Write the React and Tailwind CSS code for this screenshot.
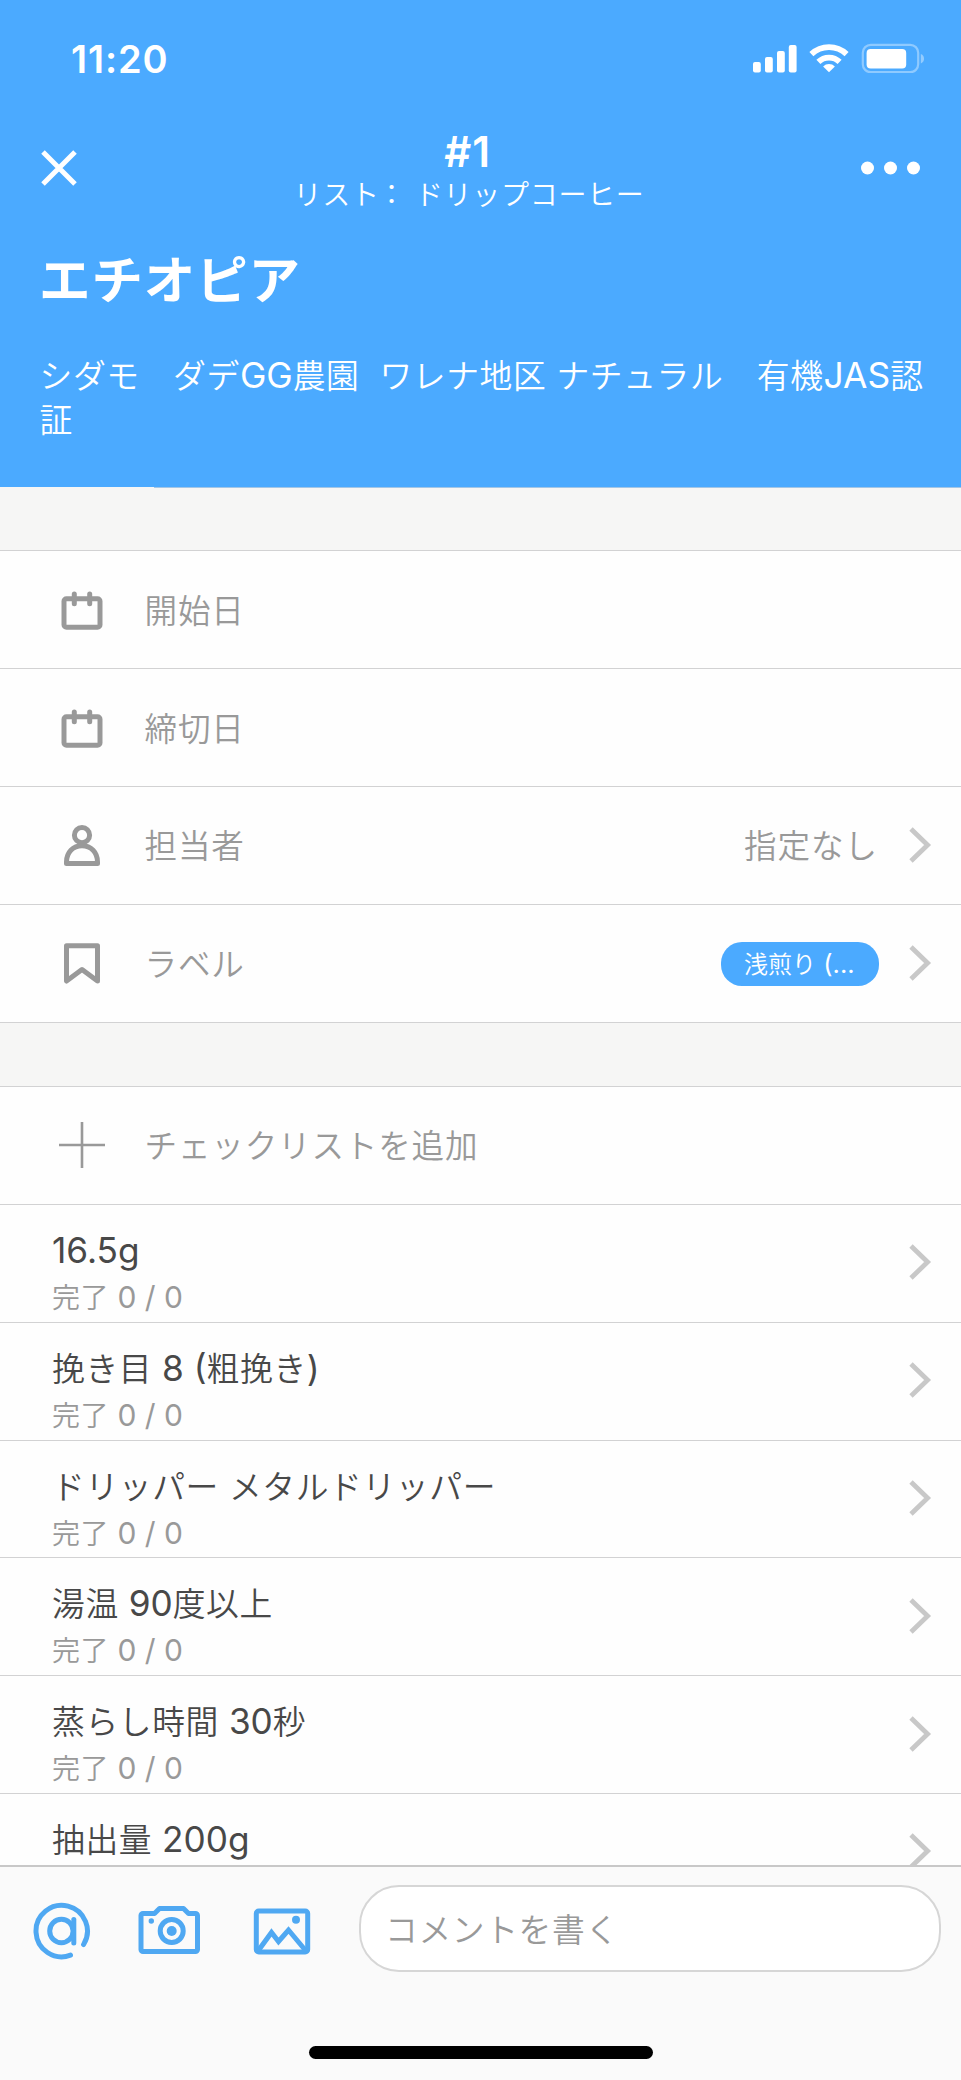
const FONT = "font-['Inter','Noto_Sans_CJK_JP',sans-serif]";

// Latin runs are set slightly larger than the Japanese around them.
function Mixed({ text, latin }) {
  const parts = text.split(/([\x20-\x7e\u00a0]+)/).filter(Boolean);
  return parts.map((part, i) =>
    /^[\x20-\x7e\u00a0]/.test(part) ? (
      <span key={i} className={`font-normal tracking-normal ${latin}`}>{part}</span>
    ) : (
      <span key={i}>{part}</span>
    )
  );
}

function StatusBar() {
  return (
    <div className="flex h-[118px] items-start justify-between pt-[36px] pr-[36px] pl-[71px]">
      <span className="text-[38px] leading-[46px] font-semibold tracking-[0.9px]">11:20</span>
      <div className="flex items-center pt-[7px]">
        <svg className="mr-[12px] h-[30px] w-[45px]" viewBox="0 0 45 30" fill="#fff">
          <rect x="1" y="19" width="7.8" height="10.5" rx="2" />
          <rect x="13" y="14" width="7.8" height="15.5" rx="2" />
          <rect x="25" y="8" width="7.8" height="21.5" rx="2" />
          <rect x="36.8" y="2" width="7.8" height="27.5" rx="2" />
        </svg>
        <svg className="mr-[12px] h-[30px] w-[40px]" viewBox="0 0 40 30" fill="none" stroke="#fff" strokeWidth="5.8">
          <path d="M2.4 11.2A25.6 25.6 0 0 1 37.6 11.2" />
          <path d="M9.4 18.9A15.2 15.2 0 0 1 30.6 18.9" />
          <path d="M20 29.3L14.1 23.4A8.4 8.4 0 0 1 25.9 23.4Z" fill="#fff" stroke="none" />
        </svg>
        <svg className="h-[30px] w-[64px]" viewBox="0 0 64 30">
          <rect x="1.8" y="1.8" width="55.4" height="27.4" rx="8" fill="none" stroke="#fff" strokeOpacity="0.38" strokeWidth="2.2" />
          <rect x="5.6" y="6" width="39.6" height="19.4" rx="4" fill="#fff" />
          <path d="M59.8 11v9.4c2.4-1 3.2-2.6 3.2-4.7s-.8-3.7-3.2-4.7z" fill="#fff" fillOpacity="0.4" />
        </svg>
      </div>
    </div>
  );
}

function Header() {
  return (
    <header className="flex h-[487px] shrink-0 flex-col bg-[#4baaff] text-white">
      <StatusBar />
      <div className="flex h-[112px] items-start justify-between pr-[40px] pl-[41px]">
        <svg className="mt-[32px] h-[36px] w-[36px]" viewBox="0 0 36 36" stroke="#fff" strokeWidth="5">
          <path d="M2 2L34 34M34 2L2 34" />
        </svg>
        <div className="flex flex-col items-center pt-[9px] pl-[1px]">
          <span className="pr-[3px] text-[42px] leading-[50px] font-semibold tracking-[0.8px]">#1</span>
          <span className="text-[28px] leading-[36px] font-[350] tracking-[0.7px] whitespace-pre">
            リスト<span className="-ml-[2px]">：</span> ドリップコーヒー
          </span>
        </div>
        <svg className="mt-[42px] h-[16px] w-[61px]" viewBox="0 0 61 16" fill="#fff">
          <circle cx="7.5" cy="8" r="6.5" />
          <circle cx="30.5" cy="8" r="6.5" />
          <circle cx="53.5" cy="8" r="6.5" />
        </svg>
      </div>
      <h1 className="mt-[18px] pl-[39px] text-[51.5px] leading-[64px] font-bold tracking-[0.9px]">エチオピア</h1>
      <p className="mt-[42px] pl-[39.5px] text-[32.8px] leading-[43.5px] font-[350] tracking-[0.6px] whitespace-pre">
        <Mixed text={"シダモ　ダデGG農園\u00a0\u00a0ワレナ地区\u00a0ナチュラル　有機JAS認"} latin="text-[35.4px]" />
        <br />証
      </p>
    </header>
  );
}

function Chevron() {
  return (
    <svg className="h-[36px] w-[23px] shrink-0" viewBox="0 0 23 36" fill="none" stroke="#c8c8c8" strokeWidth="4.8">
      <path d="M2 2L18.6 18L2 34" />
    </svg>
  );
}

function CalendarIcon() {
  return (
    <svg className="h-[46px] w-[46px]" viewBox="0 0 46 46" fill="none" stroke="#999" strokeWidth="5" strokeLinecap="round">
      <rect x="5" y="11.7" width="36" height="28.5" rx="2.5" />
      <path d="M15.3 7v9.8M30.7 7v9.8" />
    </svg>
  );
}

function PersonIcon() {
  return (
    <svg className="h-[46px] w-[46px]" viewBox="0 0 46 46" fill="none" stroke="#999" strokeWidth="5" strokeLinejoin="round">
      <circle cx="23" cy="13.2" r="7.6" />
      <path d="M7.5 41.6v-1.6C7.5 30.5 14 23.8 23 23.8S38.5 30.5 38.5 40v1.6z" />
    </svg>
  );
}

function BookmarkIcon() {
  return (
    <svg className="h-[46px] w-[46px]" viewBox="0 0 46 46" fill="none" stroke="#999" strokeWidth="5" strokeLinejoin="round">
      <path d="M7.5 5.8h31v35.2L23 29.5 7.5 41z" />
    </svg>
  );
}

function PlusIcon() {
  return (
    <svg className="h-[46px] w-[46px]" viewBox="0 0 46 46" stroke="#999" strokeWidth="2.6">
      <path d="M23 0v46M0 23h46" />
    </svg>
  );
}

function Row({ icon, label, children }) {
  return (
    <div className="flex h-[117.85px] shrink-0 items-center border-b border-[#d2d2d3] bg-[#fefefe] pr-[29px] pl-[59px]">
      {icon}
      <span className="ml-[39.5px] grow pt-[2px] text-[32.6px] leading-[44px] font-[350] tracking-[0.8px] text-[#999]">{label}</span>
      {children}
    </div>
  );
}

function ChecklistRow({ title, progress }) {
  return (
    <div className="flex h-[117.85px] shrink-0 items-center border-b border-[#d2d2d3] bg-[#fefefe] pr-[29px] pb-[2px] pl-[52px]">
      <div className="flex h-full grow flex-col pt-[23px]">
        <span className="text-[32.8px] leading-[44px] font-[350] tracking-[0.6px] text-[#484848] whitespace-pre">
          <Mixed text={title} latin="text-[35.2px]" />
        </span>
        {progress && (
          <span className="mt-[5px] text-[28px] leading-[38px] font-[350] tracking-[0.5px] text-[#999] whitespace-pre">
            <Mixed text={progress} latin="text-[30px]" />
          </span>
        )}
      </div>
      <Chevron />
    </div>
  );
}

const CHECKLISTS = [
  { title: "16.5g", progress: "完了 0 / 0" },
  { title: "挽き目 8 (粗挽き)", progress: "完了 0 / 0" },
  { title: "ドリッパー メタルドリッパー", progress: "完了 0 / 0" },
  { title: "湯温 90度以上", progress: "完了 0 / 0" },
  { title: "蒸らし時間 30秒", progress: "完了 0 / 0" },
  { title: "抽出量 200g" },
];

function CommentBar() {
  return (
    <footer className="flex h-[215px] shrink-0 flex-col items-center border-t-2 border-[#c8c8c8] bg-[#fafafa]">
      <div className="flex w-full items-center pt-[18px] pr-[20.5px] pl-[31.5px]">
        <svg className="mt-[5px] h-[60px] w-[60px]" viewBox="0 0 60 60" fill="none" stroke="#4fa8f2" strokeWidth="5" strokeLinecap="round">
          <path d="M51.6 43.5A25.7 25.7 0 1 0 38.5 54.2" />
          <circle cx="29.4" cy="30" r="11.7" />
          <path d="M41.8 18.5v23.5" />
        </svg>
        <svg className="mt-[5px] ml-[46.5px] h-[60px] w-[64px]" viewBox="0 0 64 60" fill="none" stroke="#4fa8f2" strokeWidth="5" strokeLinejoin="round">
          <path d="M3 14.5a2 2 0 0 1 2-2h11.5l5-5h24l5 5H57.5a2 2 0 0 1 2 2v34a2 2 0 0 1-2 2H5a2 2 0 0 1-2-2z" />
          <circle cx="33.7" cy="30" r="11.5" />
          <circle cx="33.7" cy="30" r="5" fill="#4fa8f2" stroke="none" />
          <circle cx="13.3" cy="20" r="2.7" fill="#4fa8f2" stroke="none" />
        </svg>
        <svg className="mt-[5px] ml-[50px] h-[60px] w-[60px]" viewBox="0 0 60 60" fill="none" stroke="#4fa8f2" strokeWidth="5">
          <rect x="4.3" y="10" width="51.4" height="41" rx="2.5" />
          <path d="M6 50L19.5 31.5L26.5 40.5L36.5 29L54 50" />
          <circle cx="44" cy="18.7" r="4" fill="#4fa8f2" stroke="none" />
        </svg>
        <div className="ml-[47px] flex h-[87px] grow items-center rounded-[40px] border-2 border-[#d6d6d6] bg-white pl-[24px]">
          <span className="pt-[3px] text-[32.8px] leading-[44px] font-[350] tracking-[0.6px] text-[#999]">コメントを書く</span>
        </div>
      </div>
      <div className="mt-[74px] h-[13px] w-[344px] rounded-full bg-black" />
    </footer>
  );
}

export default function App() {
  return (
    <div className={`flex h-[2080px] w-[961px] flex-col overflow-hidden bg-white ${FONT}`} lang="ja">
      <div className="flex h-[1865px] shrink-0 flex-col overflow-hidden">
        <Header />
        <div className="h-[64.3px] shrink-0 border-b border-[#d2d2d3] bg-[#f6f6f5]">
          <div className="ml-[154px] h-px bg-[#a3c6e6]" />
        </div>
        <Row icon={<CalendarIcon />} label="開始日" />
        <Row icon={<CalendarIcon />} label="締切日" />
        <Row icon={<PersonIcon />} label="担当者">
          <span className="mr-[31px] pt-[1px] text-[32.6px] leading-[44px] font-[350] tracking-[0.9px] text-[#999]">指定なし</span>
          <Chevron />
        </Row>
        <Row icon={<BookmarkIcon />} label="ラベル">
          <div className="mt-[1px] mr-[30px] flex h-[44px] w-[158px] items-center rounded-[21px] bg-[#4baaff] pl-[23px]">
            <span className="pt-[1px] text-[24px] leading-[34px] font-[350] text-white whitespace-pre">
              <Mixed text="浅煎り (..." latin="text-[25.6px]" />
            </span>
          </div>
          <Chevron />
        </Row>
        <div className="h-[64.3px] shrink-0 border-b border-[#d2d2d3] bg-[#f6f6f5]" />
        <Row icon={<PlusIcon />} label="チェックリストを追加" />
        {CHECKLISTS.map((item) => (
          <ChecklistRow key={item.title} title={item.title} progress={item.progress} />
        ))}
      </div>
      <CommentBar />
    </div>
  );
}
